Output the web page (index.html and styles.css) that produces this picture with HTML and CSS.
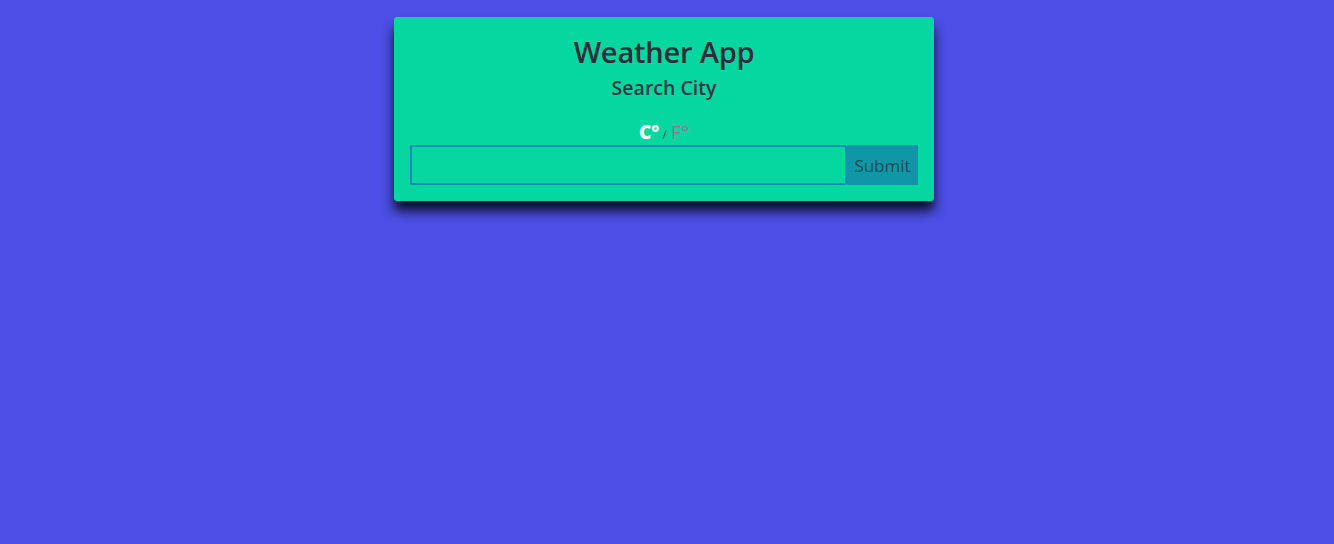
FILE: index.html
```html
<!DOCTYPE html>
<html>
<head>
<meta charset="utf-8">
<link rel="stylesheet" href="styles.css">
</head>
<body>
<div class="card">
  <h1 class="title">Weather App</h1>
  <h2 class="subtitle">Search City</h2>
  <div class="units"><span class="unit-c">C°</span><span class="sep">/</span><span class="unit-f">F°</span></div>
  <form class="search">
    <input class="city-input" type="text">
    <button class="submit" type="button">Submit</button>
  </form>
</div>
</body>
</html>
```
FILE: styles.css
```css
html, body {
  margin: 0;
  padding: 0;
}
body {
  background: #4d4fe6;
  font-family: "Open Sans", "Noto Sans", sans-serif;
  color: #2b2d3a;
  height: 544px;
}
.card {
  width: 540px;
  box-sizing: border-box;
  margin: 17px 0 0 calc(50% - 273px);
  background: #06d6a0;
  border-radius: 3px;
  padding: 14px 16px 16px;
  box-shadow: 0 10px 12px rgba(0, 0, 8, 0.85);
  display: flex;
  flex-direction: column;
  align-items: center;
}
.title {
  margin: 0;
  font-size: 29px;
  font-weight: 600;
  line-height: 42px;
  letter-spacing: -0.2px;
}
.subtitle {
  margin: 0;
  font-size: 19.5px;
  font-weight: 600;
  line-height: 30px;
  letter-spacing: 0;
  color: #333543;
}
.units {
  margin-top: 18px;
  line-height: 22px;
  height: 22px;
  display: flex;
  align-items: baseline;
}
.unit-c {
  color: #ffffff;
  font-weight: 800;
  font-size: 19px;
}
.sep {
  font-size: 13px;
  color: #2b4a44;
  margin: 0 4px 0 3px;
}
.unit-f {
  color: #877a8c;
  font-size: 19px;
  font-weight: 400;
}
.search {
  margin: 2px 0 0;
  display: flex;
  width: 100%;
  height: 40px;
}
.city-input {
  flex: 1;
  box-sizing: border-box;
  height: 40px;
  margin: 0;
  border: 2px solid #1a8ab4;
  border-radius: 2px;
  background: #06d6a0;
  outline: none;
  font-family: inherit;
}
.submit {
  width: 71px;
  height: 40px;
  margin: 0;
  border: none;
  background: #0f97a8;
  color: #1d4a56;
  font-family: inherit;
  font-size: 17px;
  padding: 0;
}
```
